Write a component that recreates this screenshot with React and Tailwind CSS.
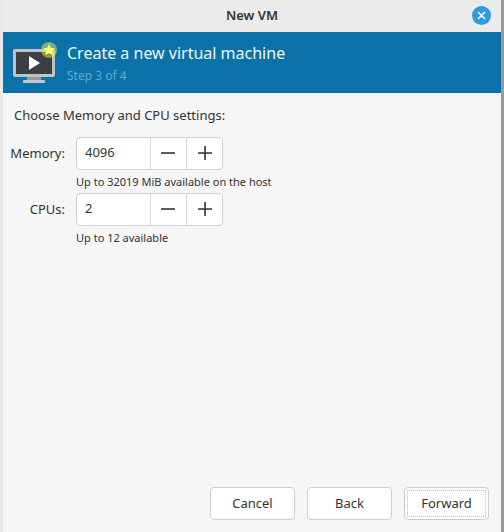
export default function App() {
  const f = { fontFamily: '"Noto Sans", "Open Sans", sans-serif' };
  const Spin = ({ v }) => (
    <div className="flex h-[33px] w-[147px] rounded-[4px] border border-[#cfcfcf] bg-white">
      <div className="flex w-[73px] items-center pl-[8px] text-[13px] text-[#333]">{v}</div>
      <div className="flex w-[37px] items-center justify-center border-l border-[#d8d8d8]">
        <svg width="16" height="16" viewBox="0 0 16 16"><path d="M1 8h14" stroke="#333" strokeWidth="1.6" /></svg>
      </div>
      <div className="flex w-[36px] items-center justify-center border-l border-[#d8d8d8]">
        <svg width="16" height="16" viewBox="0 0 16 16"><path d="M1 8h14M8 1v14" stroke="#333" strokeWidth="1.6" /></svg>
      </div>
    </div>
  );
  const Btn = ({ t, dotted }) => (
    <div className="flex h-[33px] w-[85px] items-center justify-center rounded-[4px] border border-[#cdcdcd] bg-white text-[13px] text-[#333]">
      <div className={dotted ? "flex h-[27px] w-[79px] items-center justify-center border border-dotted border-[#bbb]" : ""}>{t}</div>
    </div>
  );
  return (
    <div style={f} className="flex h-[532px] w-[504px] bg-[#9a9a9a]">
      <div className="w-[3px] bg-[#e8e8e8]" />
      <div className="flex w-[498px] flex-col bg-[#f6f6f6]">
        <div className="relative flex h-[32px] items-center justify-center bg-[#ebebeb] text-[13px] font-semibold text-[#333]">
          New VM
          <div className="absolute right-[10px] top-[6px] flex h-[19px] w-[19px] items-center justify-center rounded-full bg-[#2d9be0]">
            <svg width="9" height="9" viewBox="0 0 9 9"><path d="M1 1l7 7M8 1L1 8" stroke="white" strokeWidth="1.6" /></svg>
          </div>
        </div>
        <div className="flex h-[61px] items-center bg-[#0a72a8] pl-[8px]">
          <svg width="48" height="44" viewBox="0 0 48 44">
            <rect x="2" y="8" width="42" height="28" rx="2" fill="#bfc3c6" />
            <rect x="5" y="11" width="36" height="22" fill="#3a3f44" />
            <path d="M18 15v14l11-7z" fill="white" />
            <rect x="16" y="36" width="14" height="3" fill="#999" />
            <rect x="12" y="39" width="22" height="3" rx="1" fill="#c8c8c8" />
            <circle cx="38" cy="9" r="8" fill="#e8ef4a" opacity="0.5" />
            <path d="M38 3l1.8 3.8 4 .5-3 2.8.8 4-3.6-2-3.6 2 .8-4-3-2.8 4-.5z" fill="#fbff7a" />
          </svg>
          <div className="ml-[8px] flex flex-col">
            <div className="text-[16px] leading-[20px] text-[#eef6fb]">Create a new virtual machine</div>
            <div className="mt-[6px] text-[12px] leading-[14px] text-[#5ea9d6]">Step 3 of 4</div>
          </div>
        </div>
        <div className="px-[11px] pt-[13px] text-[13px] text-[#333]">Choose Memory and CPU settings:</div>
        <div className="mt-[11px] grid grid-cols-[59px_auto] gap-x-[11px] pl-[3px]">
          <div className="pt-[7px] text-right text-[13px] text-[#333]">Memory:</div>
          <div>
            <Spin v="4096" />
            <div className="mt-[5px] text-[11px] leading-[14px] text-[#333]">Up to 32019 MiB available on the host</div>
          </div>
          <div className="mt-[4px] pt-[7px] text-right text-[13px] text-[#333]">CPUs:</div>
          <div className="mt-[4px]">
            <Spin v="2" />
            <div className="mt-[5px] text-[11px] leading-[14px] text-[#333]">Up to 12 available</div>
          </div>
        </div>
        <div className="mt-auto mb-[12px] flex justify-end gap-[12px] pr-[12px]">
          <Btn t="Cancel" />
          <Btn t="Back" />
          <Btn t="Forward" dotted />
        </div>
      </div>
    </div>
  );
}
